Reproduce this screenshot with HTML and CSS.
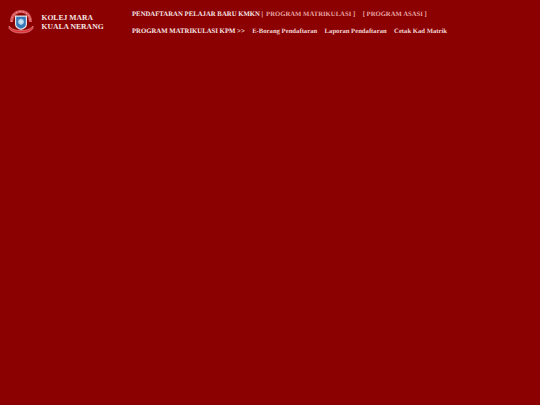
FILE: index.html
```html
<!DOCTYPE html>
<html lang="ms">
<head>
<meta charset="utf-8">
<title>Kolej MARA Kuala Nerang</title>
<link rel="stylesheet" href="styles.css">
</head>
<body>
<header class="header">
  <div class="brand">
    <svg class="logo" viewBox="0 0 26 26" aria-hidden="true">
      <path d="M3.500 13 C3.500 6 8 2.500 13 2.500 C18 2.500 22.500 6 22.500 13" fill="none" stroke="#d9585c" stroke-width="3"/>
      <path d="M3.500 13 C3.500 6 8 2.500 13 2.500 C18 2.500 22.500 6 22.500 13" fill="none" stroke="#f0c8c8" stroke-width="0.600" stroke-dasharray="1.500 2"/>
      <path d="M1 17 C4 20.500 8 21.500 13 21.500 C18 21.500 22 20.500 25 17 L25 19.500 C22 23 18 24 13 24 C8 24 4 23 1 19.500 Z" fill="#e0323a" stroke="#eeb4b4" stroke-width="0.500"/>
      <path d="M7 6.500 H19 V15 C19 18.500 16 20 13 21 C10 20 7 18.500 7 15 Z" fill="#e8e4e4"/>
      <path d="M8.200 7.800 H17.800 V15 C17.800 17.800 15.500 18.800 13 19.700 C10.500 18.800 8.200 17.800 8.200 15 Z" fill="#3577b8"/>
      <circle cx="13" cy="12.800" r="2.800" fill="#9cc6e6"/>
      <path d="M13 9.500 V16 M9.900 12.800 H16.100 M10.800 10.600 L15.200 15 M15.200 10.600 L10.800 15" stroke="#e0eef8" stroke-width="0.600"/>
    </svg>
    <div class="brand-name">KOLEJ MARA<br>KUALA NERANG</div>
  </div>
  <nav class="nav">
    <div class="nav-row">
      <span class="strong">PENDAFTARAN PELAJAR BARU KMKN |</span>
      <a class="link-pink" href="#">PROGRAM MATRIKULASI ]</a>
      <a class="link-pink gap" href="#">[ PROGRAM ASASI ]</a>
    </div>
    <div class="nav-row row-two">
      <span class="strong">PROGRAM MATRIKULASI KPM &gt;&gt;</span>
      <a class="link-sub" href="#">E-Borang Pendaftaran</a>
      <a class="link-sub" href="#">Laporan Pendaftaran</a>
      <a class="link-sub" href="#">Cetak Kad Matrik</a>
    </div>
  </nav>
</header>
</body>
</html>
```
FILE: styles.css
```css
html, body {
  margin: 0;
  height: 100%;
  background: #8b0000;
}
body {
  font-family: "Liberation Serif", "Times New Roman", serif;
  font-weight: bold;
  overflow: hidden;
  text-rendering: geometricPrecision;
}
a { text-decoration: none; }
.header {
  display: flex;
  align-items: flex-start;
}
.brand {
  width: 132px;
  flex: none;
  display: flex;
  align-items: center;
  gap: 7.500px;
  padding: 9px 0 0 8px;
  box-sizing: border-box;
}
.logo {
  width: 26px;
  height: 26px;
  flex: none;
}
.brand-name {
  color: #f5e6e6;
  font-size: 7.640px;
  line-height: 9px;
}
.nav {
  padding-top: 10px;
  font-size: 6.750px;
}
.nav-row {
  display: flex;
  height: 9px;
  line-height: 9px;
  white-space: nowrap;
}
.row-two { margin-top: 8px; }
.strong { color: #f5e6e6; }
.link-pink { color: #e8a4a4; margin-left: 3px; font-size: 6.700px; }
.link-pink.gap { margin-left: 7.500px; }
.link-sub { color: #f0d4d4; margin-left: 7.400px; font-size: 6.680px; }
```
